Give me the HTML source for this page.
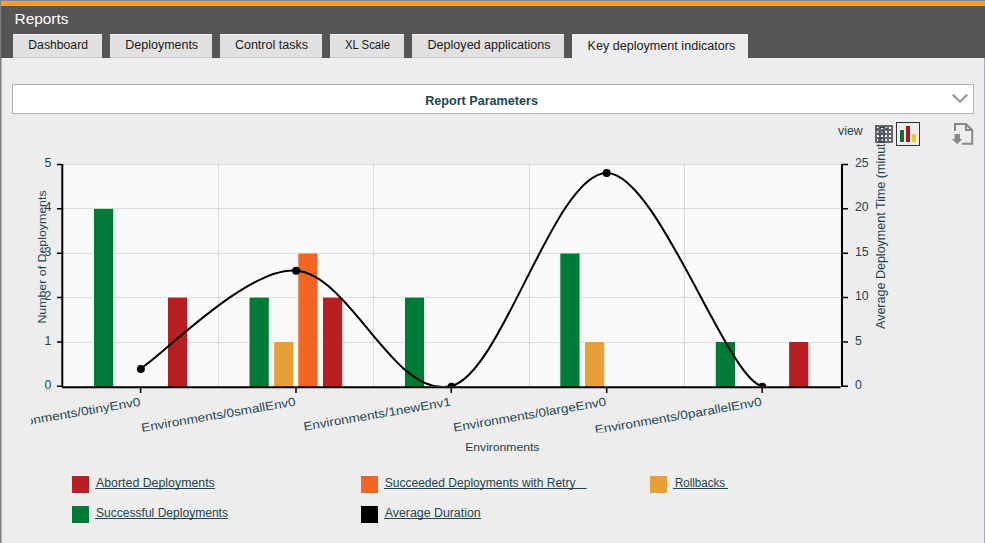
<!DOCTYPE html>
<html><head><meta charset="utf-8">
<style>
html,body{margin:0;padding:0;}
body{width:985px;height:543px;overflow:hidden;position:relative;background:#ededed;font-family:"Liberation Sans",sans-serif;}
.abs{position:absolute;}
#top0{left:0;top:0;width:985px;height:1px;background:#7d8b95;}
#orange{left:0;top:1px;width:985px;height:5px;background:#f99c33;}
#hdr{left:0;top:6px;width:985px;height:52px;background:#555555;}
.tab{position:absolute;top:34px;height:23px;background:#e1e1e1;border-top:1px solid #f0f0f0;border-bottom:1px solid #cccccc;box-sizing:content-box;height:22px;}
.tab.act{background:#ededed;border-bottom:0;height:23px;}
#lstrip0{left:0;top:0;width:1px;height:543px;background:#808080;}
#lstrip1{left:1px;top:58px;width:1px;height:485px;background:#b0b4b4;}
#rstrip{left:984px;top:58px;width:1px;height:485px;background:#a5abae;}
#params{left:12px;top:84px;width:960px;height:28px;background:#fff;border:1px solid #b3b3b3;}
svg{position:absolute;left:0;top:0;}
</style></head><body>
<div class="abs" id="top0"></div>
<div class="abs" id="orange"></div>
<div class="abs" id="hdr"></div>
<div class="tab" style="left:13px;width:89px;"></div>
<div class="tab" style="left:110px;width:102px;"></div>
<div class="tab" style="left:220px;width:102px;"></div>
<div class="tab" style="left:330px;width:74px;"></div>
<div class="tab" style="left:412px;width:152px;"></div>
<div class="tab act" style="left:572px;width:176px;"></div>
<div class="abs" id="lstrip0"></div>
<div class="abs" id="lstrip1"></div>
<div class="abs" id="rstrip"></div>
<div class="abs" id="params"></div>

<svg width="985" height="543" viewBox="0 0 985 543" font-family="Liberation Sans, sans-serif">
  <!-- header texts -->
  <text x="14.5" y="24" font-size="15.5" fill="#ffffff" textLength="54" lengthAdjust="spacingAndGlyphs">Reports</text>
  <g font-size="12" fill="#1a1a1a">
    <text x="28.3" y="48.6" textLength="59.7" lengthAdjust="spacingAndGlyphs">Dashboard</text>
    <text x="125.3" y="48.6" textLength="72.8" lengthAdjust="spacingAndGlyphs">Deployments</text>
    <text x="234.9" y="48.6" textLength="73.1" lengthAdjust="spacingAndGlyphs">Control tasks</text>
    <text x="345" y="48.6" textLength="45" lengthAdjust="spacingAndGlyphs">XL Scale</text>
    <text x="427.5" y="48.6" textLength="123" lengthAdjust="spacingAndGlyphs">Deployed applications</text>
    <text x="587.5" y="49.8" textLength="147.8" lengthAdjust="spacingAndGlyphs">Key deployment indicators</text>
  </g>
  <text x="425.2" y="104.6" font-size="12.2" font-weight="bold" fill="#1a4652" textLength="112.7" lengthAdjust="spacingAndGlyphs">Report Parameters</text>
  <path d="M952.8 94.6 L960 101.8 L967.2 94.6" fill="none" stroke="#9a9a9a" stroke-width="2.2"/>

  <text x="838.1" y="134.8" font-size="12.5" fill="#1e3f4a" textLength="24.6" lengthAdjust="spacingAndGlyphs">view</text>
  <!-- grid icon -->
  <rect x="875" y="125" width="18" height="18" fill="#666666"/>
  <g fill="#ffffff">
    <rect x="877" y="127" width="2" height="2"/><rect x="881" y="127" width="2" height="2"/><rect x="885" y="127" width="2" height="2"/><rect x="889" y="127" width="2" height="2"/>
    <rect x="877" y="131" width="2" height="2"/><rect x="881" y="131" width="2" height="2"/><rect x="885" y="131" width="2" height="2"/><rect x="889" y="131" width="2" height="2"/>
    <rect x="877" y="135" width="2" height="2"/><rect x="881" y="135" width="2" height="2"/><rect x="885" y="135" width="2" height="2"/><rect x="889" y="135" width="2" height="2"/>
    <rect x="877" y="139" width="2" height="2"/><rect x="881" y="139" width="2" height="2"/><rect x="885" y="139" width="2" height="2"/><rect x="889" y="139" width="2" height="2"/>
  </g>
  <!-- chart icon -->
  <rect x="896.5" y="122.5" width="23" height="23" fill="none" stroke="#333333" stroke-width="1"/>
  <rect x="900" y="130" width="4" height="12" fill="#1a6b35"/>
  <rect x="906" y="126" width="4" height="16" fill="#b5121b"/>
  <rect x="912" y="134" width="4" height="8" fill="#e0d21f"/>
  <!-- export icon -->
  <g fill="none" stroke="#888888" stroke-width="2">
    <path d="M955 131 V124 H966 L972.2 130.2 V143.8 H962"/>
    <path d="M966 124 V130 H972.2"/>
  </g>
  <path d="M954.5 134 H960 V139 H962.3 L957.2 144.3 L952 139 H954.5 Z" fill="#888888"/>

  <!-- chart -->
  <rect x="63" y="164" width="777" height="222" fill="#fafafa"/>
  <g stroke="rgba(0,0,0,0.12)" stroke-width="1" fill="none">
    <path d="M63 164.5 H840 M63 208.5 H840 M63 253.5 H840 M63 297.5 H840 M63 342.5 H840"/>
    <path d="M218.5 164 V386 M373.5 164 V386 M529.5 164 V386 M684.5 164 V386"/>
  </g>
  <!-- bars -->
  <g stroke="#ffffff" stroke-width="1">
    <!-- cat0 -->
    <rect x="93.5" y="208.2" width="20.3" height="179.3" fill="#007a37"/>
    <rect x="167.5" y="297.0" width="20.3" height="90.5" fill="#b71f24"/>
    <!-- cat1 -->
    <rect x="249" y="297.0" width="20.3" height="90.5" fill="#007a37"/>
    <rect x="273.7" y="341.4" width="20.3" height="46.1" fill="#e89f35"/>
    <rect x="297.8" y="252.9" width="20.3" height="134.6" fill="#f26522"/>
    <rect x="322.5" y="297.0" width="20.3" height="90.5" fill="#b71f24"/>
    <!-- cat2 -->
    <rect x="404.4" y="297.0" width="20.3" height="90.5" fill="#007a37"/>
    <!-- cat3 -->
    <rect x="559.8" y="252.9" width="20.3" height="134.6" fill="#007a37"/>
    <rect x="584.5" y="341.4" width="20.3" height="46.1" fill="#e89f35"/>
    <!-- cat4 -->
    <rect x="715.2" y="341.4" width="20.3" height="46.1" fill="#007a37"/>
    <rect x="788.6" y="341.4" width="20.3" height="46.1" fill="#b71f24"/>
  </g>
  <!-- spline -->
  <clipPath id="plotclip"><rect x="63" y="150" width="777" height="236.3"/></clipPath>
  <g clip-path="url(#plotclip)">
  <path d="M140.70 368.24 C156.33 361.22 246.92 266.06 296.10 270.56 C351.70 275.64 394.58 400.44 451.50 386.00 C502.01 373.19 554.76 172.88 606.90 172.88 C656.94 172.88 728.50 382.02 762.30 386.00" fill="none" stroke="#000000" stroke-width="2"/>
  <g fill="#000000">
    <circle cx="140.9" cy="368.9" r="4"/>
    <circle cx="296.1" cy="270.8" r="4"/>
    <circle cx="451.6" cy="386.7" r="4"/>
    <circle cx="606.7" cy="172.9" r="4"/>
    <circle cx="762.3" cy="386.7" r="4"/>
  </g>
  </g>
  <!-- axes -->
  <g stroke="#000000" stroke-width="2" fill="none">
    <path d="M62.3 164 V387"/>
    <path d="M842 164 V387"/>
    <path d="M62 387.2 H840.5"/>
  </g>
  <g stroke="#000000" stroke-width="1.5" fill="none">
    <path d="M57 164.4 H62 M57 208.8 H62 M57 253.2 H62 M57 297.6 H62 M57 342 H62 M57 386.3 H62"/>
    <path d="M842 164.4 H848 M842 208.8 H848 M842 253.2 H848 M842 297.6 H848 M842 342 H848 M842 386.3 H848"/>
    <path d="M140.6 388 V393 M296 388 V393 M451.3 388 V393 M606.7 388 V393 M762.2 388 V393"/>
  </g>
  <!-- y labels left -->
  <g font-size="12.3" fill="#1e4550" text-anchor="end">
    <text x="51.3" y="167">5</text>
    <text x="51.3" y="211.4">4</text>
    <text x="51.3" y="255.8">3</text>
    <text x="51.3" y="300.2">2</text>
    <text x="51.3" y="344.6">1</text>
    <text x="51.3" y="389">0</text>
  </g>
  <g font-size="12.3" fill="#1e4550" text-anchor="start">
    <text x="855" y="167">25</text>
    <text x="855" y="211.4">20</text>
    <text x="855" y="255.8">15</text>
    <text x="855" y="300.2">10</text>
    <text x="855" y="344.6">5</text>
    <text x="855" y="389">0</text>
  </g>
  <!-- axis titles -->
  <text transform="translate(45.6,323.6) rotate(-90)" font-size="11.5" fill="#1e4550" textLength="133.2" lengthAdjust="spacingAndGlyphs">Number of Deployments</text>
  <text x="465.3" y="450.8" font-size="11.5" fill="#1e3f4a" textLength="74" lengthAdjust="spacingAndGlyphs">Environments</text>
  <!-- x labels -->
  <clipPath id="clipx"><rect x="31" y="380" width="954" height="52.5"/></clipPath>
  <g font-size="12" fill="#254853" clip-path="url(#clipx)">
    <text transform="translate(140.9,405.6) rotate(-9.7)" text-anchor="end" textLength="147.2" lengthAdjust="spacingAndGlyphs">Environments/0tinyEnv0</text>
    <text transform="translate(296.2,405.6) rotate(-9.7)" text-anchor="end" textLength="156.4" lengthAdjust="spacingAndGlyphs">Environments/0smallEnv0</text>
    <text transform="translate(451.3,405.6) rotate(-9.7)" text-anchor="end" textLength="149.3" lengthAdjust="spacingAndGlyphs">Environments/1newEnv1</text>
    <text transform="translate(606.7,405.6) rotate(-9.7)" text-anchor="end" textLength="154.9" lengthAdjust="spacingAndGlyphs">Environments/0largeEnv0</text>
    <text transform="translate(762.2,405.6) rotate(-9.7)" text-anchor="end" textLength="169.1" lengthAdjust="spacingAndGlyphs">Environments/0parallelEnv0</text>
  </g>
  <!-- right title (drawn over icon) -->
  <text transform="translate(885,329) rotate(-90)" font-size="12" fill="#1e4550" textLength="203" lengthAdjust="spacingAndGlyphs">Average Deployment Time (minutes)</text>

  <!-- legend -->
  <rect x="72" y="476" width="17" height="17" fill="#b71f24"/>
  <rect x="72" y="506" width="17" height="17" fill="#007a37"/>
  <rect x="361" y="476" width="17" height="17" fill="#f26522"/>
  <rect x="361" y="506" width="17" height="17" fill="#000000"/>
  <rect x="650" y="476" width="17" height="17" fill="#e89f35"/>
  <g font-size="12.5" fill="#1e4550">
    <text x="96" y="487" textLength="118.8" lengthAdjust="spacingAndGlyphs">Aborted Deployments</text>
    <text x="96" y="516.6" textLength="132" lengthAdjust="spacingAndGlyphs">Successful Deployments</text>
    <text x="384.7" y="487" textLength="190.8" lengthAdjust="spacingAndGlyphs">Succeeded Deployments with Retry</text>
    <text x="384.7" y="516.6" textLength="96" lengthAdjust="spacingAndGlyphs">Average Duration</text>
    <text x="675" y="487" textLength="50" lengthAdjust="spacingAndGlyphs">Rollbacks</text>
  </g>
  <g fill="#1e4550">
    <rect x="95" y="488" width="120" height="1"/>
    <rect x="95" y="518" width="133" height="1"/>
    <rect x="384" y="488" width="202.5" height="1"/>
    <rect x="384" y="518" width="97" height="1"/>
    <rect x="673" y="488" width="55" height="1"/>
  </g>
</svg>
</body></html>
